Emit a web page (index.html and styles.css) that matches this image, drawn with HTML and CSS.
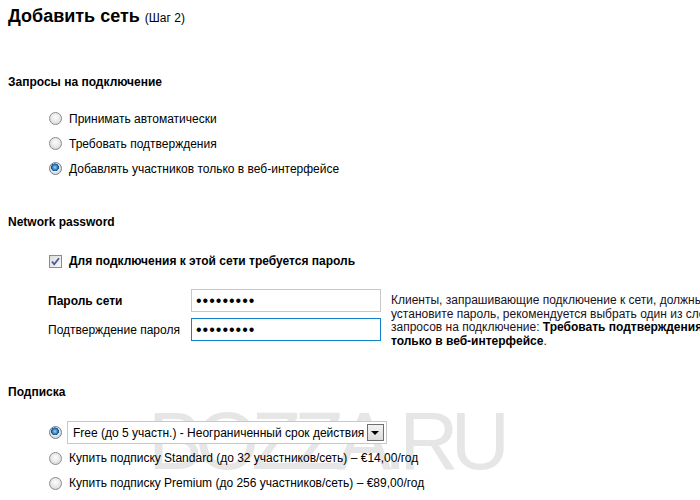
FILE: index.html
```html
<!DOCTYPE html>
<html lang="ru">
<head>
    <meta charset="UTF-8">
    <title>Добавить сеть</title>
    <link rel="stylesheet" href="styles.css">
</head>
<body>
<div class="watermark">BOZZA.RU</div>
<div class="page">
    <h1>Добавить сеть <span class="step">(Шаг 2)</span></h1>

    <h3 class="section-title first">Запросы на подключение</h3>
    <div class="options">
        <label class="option"><input type="radio" name="join"> Принимать автоматически</label>
        <label class="option"><input type="radio" name="join"> Требовать подтверждения</label>
        <label class="option"><input type="radio" name="join" checked> Добавлять участников только в веб-интерфейсе</label>
    </div>

    <h3 class="section-title">Network password</h3>
    <div class="options">
        <label class="option check-option">
            <span class="checkbox">
                <svg width="13" height="13" viewBox="0 0 13 13">
                    <path d="M3 6.5 L5.2 9.2 L10 3.2" fill="none" stroke="#4a5b96" stroke-width="1.8"/>
                </svg>
            </span>
            <b>Для подключения к этой сети требуется пароль</b>
        </label>
    </div>

    <div class="password-block">
        <div class="password-fields">
            <div class="field-row">
                <label class="field-label strong">Пароль сети</label>
                <input type="password" class="text-input" value="123456789">
            </div>
            <div class="field-row">
                <label class="field-label">Подтверждение пароля</label>
                <input type="password" class="text-input focused" value="123456789">
            </div>
        </div>
        <p class="help">Клиенты, запрашивающие подключение к сети, должны будут вводить этот пароль. Если вы<br>
            установите пароль, рекомендуется выбрать один из следующих параметров<br>
            запросов на подключение: <b>Требовать подтверждения</b> или <b>Добавлять участников</b><br>
            <b>только в веб-интерфейсе</b>.</p>
    </div>

    <h3 class="section-title sub">Подписка</h3>
    <div class="options">
        <div class="option select-option">
            <input type="radio" name="plan" checked>
            <div class="select-wrap">
                <select class="plan-select">
                    <option>Free (до 5 участн.) - Неограниченный срок действия</option>
                </select>
            </div>
        </div>
        <label class="option"><input type="radio" name="plan"> Купить подписку Standard (до 32 участников/сеть) – €14,00/год</label>
        <label class="option"><input type="radio" name="plan"> Купить подписку Premium (до 256 участников/сеть) – €89,00/год</label>
    </div>
</div>
</body>
</html>
```

FILE: styles.css
```css
html, body {
    overflow: hidden;
}

body {
    margin: 0;
    padding: 4px 8px;
    background: #fff;
    color: #000;
    font-family: 'Liberation Sans', Arial, sans-serif;
    font-size: 12px;
    position: relative;
}

.page {
    position: relative;
    width: 1000px;
}

.watermark {
    position: absolute;
    left: 148px;
    top: 400px;
    font-size: 82px;
    letter-spacing: -7.5px;
    color: #e6e6e6;
    white-space: nowrap;
    line-height: 1;
}

h1 {
    margin: 0;
    font-size: 18px;
    line-height: 24px;
    font-weight: bold;
}

.step {
    font-size: 12px;
    font-weight: normal;
}

.section-title {
    margin: 34px 0 0;
    font-size: 12px;
    line-height: 15px;
    font-weight: bold;
}

.section-title.first {
    margin-top: 45px;
}

.section-title.sub {
    margin-top: 36px;
}

.options {
    margin-top: 16px;
    padding-left: 41px;
}

.option {
    display: flex;
    align-items: center;
    height: 25px;
    white-space: nowrap;
}

input[type="radio"] {
    appearance: none;
    width: 13px;
    height: 13px;
    margin: 0 7px 0 0;
    border: 1px solid #8c8c8c;
    border-radius: 50%;
    background: radial-gradient(circle at 50% 40%, #fdfdfd 0%, #e6e6e6 55%, #cfcfcf 100%);
    box-sizing: border-box;
    flex-shrink: 0;
}

input[type="radio"]:checked {
    border-color: #6e7f90;
    background: radial-gradient(circle at 45% 40%, #9fd3f4 0%, #2f7fc0 28%, #124d86 42%, #e6e6e6 46%, #cfcfcf 100%);
}

.check-option {
    height: 30px;
    margin-top: 3px;
}

.checkbox {
    width: 13px;
    height: 13px;
    margin-right: 7px;
    border: 1px solid #8c8c8c;
    box-sizing: border-box;
    background: linear-gradient(135deg, #dcdcdc 0%, #f8f8f8 100%);
    display: flex;
    align-items: center;
    justify-content: center;
}

.checkbox svg {
    display: block;
    margin: -1px;
}

.password-block {
    display: flex;
    margin-top: 13px;
    padding-left: 40px;
}

.password-fields {
    display: flex;
    flex-direction: column;
    gap: 6px;
}

.field-row {
    display: flex;
    align-items: center;
}

.field-label {
    width: 143px;
}

.field-label.strong {
    font-weight: bold;
}

.text-input {
    width: 190px;
    height: 23px;
    box-sizing: border-box;
    margin: 0;
    padding: 0 4px;
    border: 1px solid #c8c8c8;
    font-family: 'Liberation Sans', Arial, sans-serif;
    font-size: 16px;
    letter-spacing: 1px;
    color: #000;
    outline: none;
}

.text-input.focused {
    border-color: #1282cf;
}

.help {
    margin: 5px 0 0 10px;
    line-height: 13.7px;
    white-space: nowrap;
    color: #1a1020;
}

.help b {
    color: #000;
}

.select-option {
    height: 26px;
    margin-top: 20px;
}

.select-option input[type="radio"] {
    margin-right: 5px;
    margin-top: -1px;
}

.select-wrap {
    position: relative;
}

.plan-select {
    appearance: none;
    width: 320px;
    height: 23px;
    margin: 0;
    padding: 0 18px 0 5px;
    border: 1px solid #c8c8c8;
    border-radius: 0;
    background: #fff;
    font-family: 'Liberation Sans', Arial, sans-serif;
    font-size: 12px;
    color: #000;
}

.select-wrap::after {
    content: "";
    position: absolute;
    right: 3px;
    top: 3px;
    width: 17px;
    height: 17px;
    box-sizing: border-box;
    border: 1px solid #6f6f6f;
    background: linear-gradient(#f3f3f3, #dcdcdc);
    pointer-events: none;
}

.select-wrap::before {
    content: "";
    position: absolute;
    right: 8px;
    top: 10px;
    border-left: 4px solid transparent;
    border-right: 4px solid transparent;
    border-top: 4px solid #000;
    z-index: 1;
    pointer-events: none;
}
```
